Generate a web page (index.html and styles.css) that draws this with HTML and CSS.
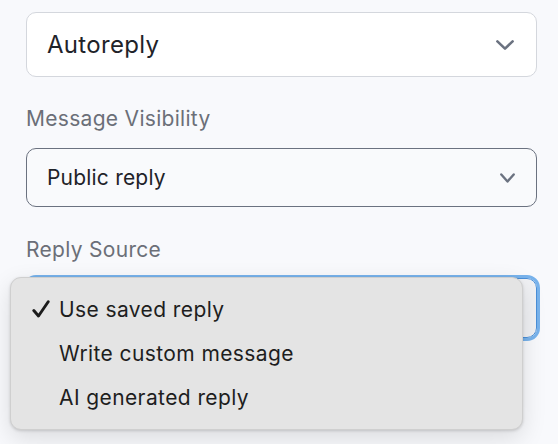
FILE: index.html
```html
<!DOCTYPE html>
<html>
<head>
<meta charset="utf-8">
<link rel="stylesheet" href="styles.css">
</head>
<body>
<div class="form">
  <div class="select select-plain">
    <span class="value value-lg">Autoreply</span>
    <svg class="chev" width="18" height="10" viewBox="0 0 18 10"><path d="M1.4 1.4 L9 8.6 L16.6 1.4" fill="none" stroke="#6b7280" stroke-width="2.6" stroke-linecap="round" stroke-linejoin="round"/></svg>
  </div>
  <div class="label">Message Visibility</div>
  <div class="select select-dark">
    <span class="value">Public reply</span>
    <svg class="chev" width="15" height="10" viewBox="0 0 15 10"><path d="M1.3 1.5 L7.5 8.5 L13.7 1.5" fill="none" stroke="#6b7280" stroke-width="2.4" stroke-linecap="round" stroke-linejoin="round"/></svg>
  </div>
  <div class="label label-second">Reply Source</div>
  <div class="select select-focus"></div>
</div>
<div class="menu">
  <div class="item"><span class="check">
    <svg width="18" height="18" viewBox="0 0 18 18"><path d="M1.8 10.5 L6.5 16 L16.2 1.8" fill="none" stroke="#1c1c1c" stroke-width="2.9" stroke-linecap="round" stroke-linejoin="round"/></svg>
  </span>Use saved reply</div>
  <div class="item"><span class="check"></span>Write custom message</div>
  <div class="item"><span class="check"></span>AI generated reply</div>
</div>
</body>
</html>
```
FILE: styles.css
```css
html, body {
  margin: 0;
  padding: 0;
}
body {
  background: #f8f9fc;
  font-family: Inter, "Noto Sans", sans-serif;
  width: 558px;
  height: 444px;
  position: relative;
  overflow: hidden;
}
.form {
  padding: 12px 21px 0 26px;
  display: flex;
  flex-direction: column;
}
.select {
  box-sizing: border-box;
  display: flex;
  align-items: center;
  justify-content: space-between;
  border-radius: 10px;
  padding: 0 21px 0 20px;
  color: #1f2329;
}
.select-plain {
  height: 65px;
  background: #ffffff;
  border: 1px solid #d4d7dd;
  padding-right: 22px;
}
.select-dark {
  height: 59px;
  background: #f9fafc;
  border: 1px solid #6b7280;
}
.select-focus {
  height: 60px;
  background: #f0f1f4;
  border: 1px solid #4a8fd8;
  outline: 3px solid #78b3ec;
  outline-offset: 0;
}
.value {
  font-size: 21px;
  letter-spacing: 0.2px;
}
.value-lg {
  font-size: 24px;
  letter-spacing: 0.3px;
}
.chev {
  display: block;
}
.label {
  color: #6b6f78;
  font-size: 21px;
  letter-spacing: 0.3px;
  margin: 30px 0 17px 0;
  line-height: 24px;
}
.label-second {
  margin: 31px 0 16px 0;
}
.menu {
  position: absolute;
  left: 10px;
  top: 277px;
  width: 513px;
  height: 153px;
  box-sizing: border-box;
  background: #e4e4e4;
  border: 1px solid #cfcfcf;
  border-radius: 11px;
  box-shadow: 0 8px 24px rgba(0,0,0,0.12), 0 1px 3px rgba(0,0,0,0.15);
  padding-top: 9px;
  font-family: Inter, "Noto Sans", sans-serif;
}
.item {
  display: flex;
  align-items: center;
  height: 44px;
  font-size: 21px;
  color: #1e1e1e;
  letter-spacing: 0.4px;
}
.check {
  width: 48px;
  display: flex;
  justify-content: flex-end;
  padding-right: 9px;
  box-sizing: border-box;
}
```
